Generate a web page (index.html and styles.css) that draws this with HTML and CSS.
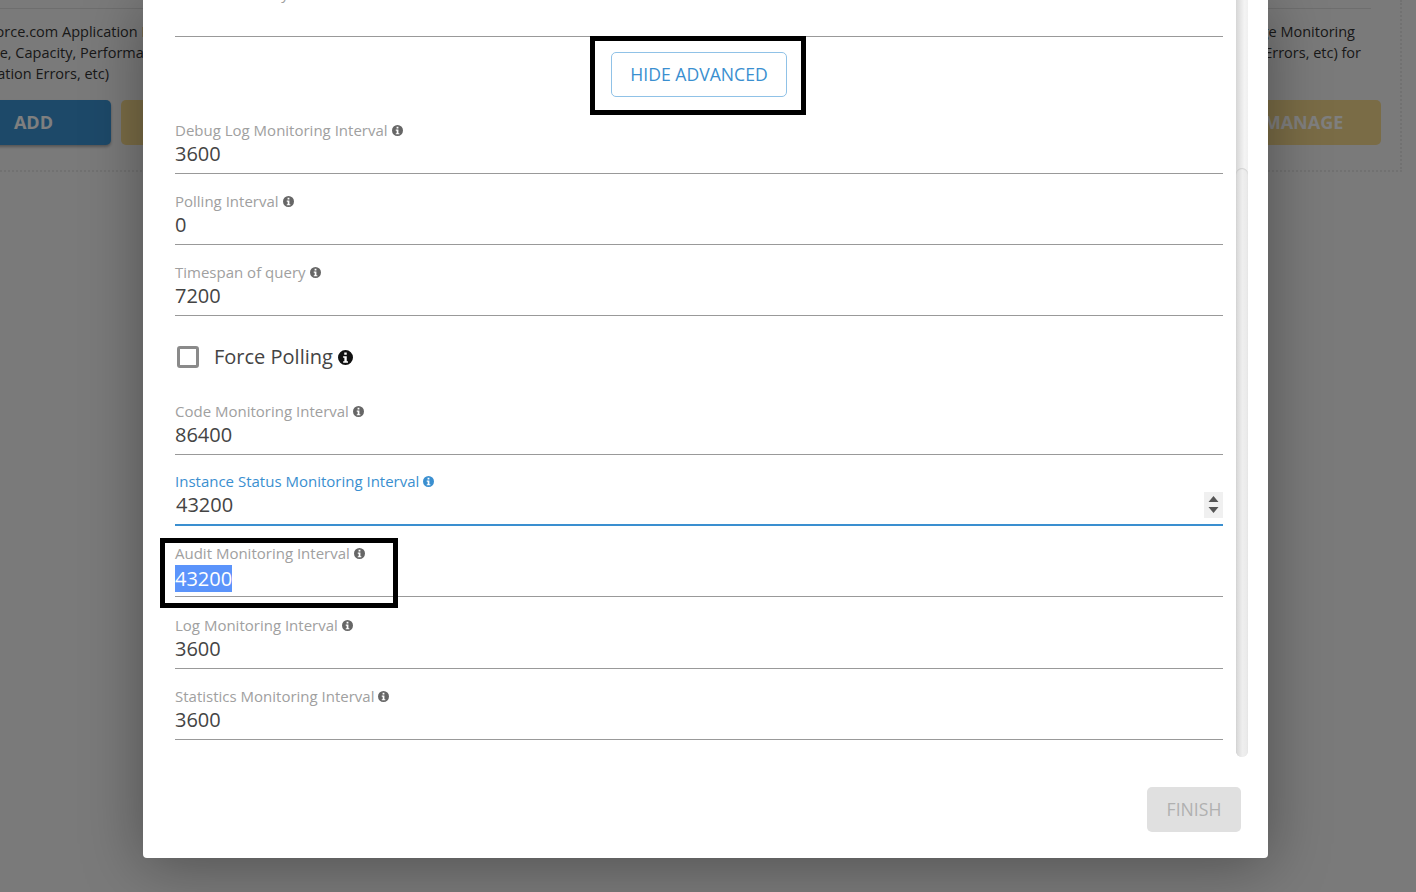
FILE: index.html
```html
<!DOCTYPE html>
<html lang="en">
<head>
<meta charset="utf-8">
<title>Add Application</title>
<link rel="stylesheet" href="styles.css">
</head>
<body>
<svg class="defs" width="0" height="0" aria-hidden="true">
  <symbol id="info" viewBox="0 0 24 24">
    <path fill-rule="evenodd" d="M12 0a12 12 0 1 0 0 24a12 12 0 0 0 0-24zM10 3.800h4v3.600h-4zM8.200 9.800h5.800v8h2v2.600H8.200v-2.600h2v-5.400h-2z"/>
  </symbol>
</svg>

<main class="page">
  <section class="card">
    <div class="rule"></div>
    <p class="blurb">Salesforce.com Application Health<br>Storage, Capacity, Performance,<br>Application Errors, etc)</p>
    <div class="actions">
      <button class="bg-btn blue">ADD</button>
      <button class="bg-btn yellow">MANAGE</button>
    </div>
  </section>
  <section class="card card-right">
    <div class="rule"></div>
    <p class="blurb blurb-right"><span class="line line-short">Salesforce.com Instance Usage Monitoring</span><span class="line">(Usage, Capacity, Limit Errors, etc) for</span></p>
    <div class="actions actions-right">
      <button class="bg-btn blue">ADD</button>
      <button class="bg-btn yellow">MANAGE</button>
    </div>
  </section>
</main>

<div class="overlay"></div>

<div class="modal">
  <div class="modal-body">
    <form class="fields">
      <div class="field field-first">
        <label class="label">Monitor Latency <svg class="i"><use href="#info"/></svg></label>
        <div class="value"></div>
      </div>
      <div class="adv-row"><button type="button" class="adv-btn">HIDE ADVANCED</button></div>
      <div class="field">
        <label class="label">Debug Log Monitoring Interval <svg class="i"><use href="#info"/></svg></label>
        <div class="value">3600</div>
      </div>
      <div class="field">
        <label class="label">Polling Interval <svg class="i"><use href="#info"/></svg></label>
        <div class="value">0</div>
      </div>
      <div class="field">
        <label class="label">Timespan of query <svg class="i"><use href="#info"/></svg></label>
        <div class="value">7200</div>
      </div>
      <div class="check-row">
        <span class="box"></span>
        <span class="check-text">Force Polling</span>
        <svg class="i-lg"><use href="#info"/></svg>
      </div>
      <div class="field">
        <label class="label">Code Monitoring Interval <svg class="i"><use href="#info"/></svg></label>
        <div class="value">86400</div>
      </div>
      <div class="field focused">
        <label class="label">Instance Status Monitoring Interval <svg class="i"><use href="#info"/></svg></label>
        <div class="value">43200</div>
        <span class="spinner">
          <svg width="19" height="26" viewBox="0 0 19 26"><path d="M9.500 4l5 6h-10zM4.500 15h10l-5 6z"/></svg>
        </span>
      </div>
      <div class="field">
        <label class="label">Audit Monitoring Interval <svg class="i"><use href="#info"/></svg></label>
        <div class="value value-selected"><span class="selected">43200</span></div>
      </div>
      <div class="field">
        <label class="label">Log Monitoring Interval <svg class="i"><use href="#info"/></svg></label>
        <div class="value">3600</div>
      </div>
      <div class="field">
        <label class="label">Statistics Monitoring Interval <svg class="i"><use href="#info"/></svg></label>
        <div class="value">3600</div>
      </div>
    </form>
    <div class="scrollbar"><div class="thumb"></div></div>
  </div>
  <div class="modal-footer">
    <button class="finish" disabled>FINISH</button>
  </div>
</div>

<div class="note note-adv"></div>
<div class="note note-audit"></div>
</body>
</html>
```
FILE: styles.css
```css
* { box-sizing: border-box; }
html, body { margin: 0; padding: 0; height: 100%; }
body {
  width: 1416px;
  height: 892px;
  overflow: hidden;
  position: relative;
  background: #f5f5f5;
  font-family: "Open Sans", "Liberation Sans", sans-serif;
  color: #333;
}
.defs { position: absolute; }

/* background page */
.page {
  width: 1446px;
  height: 172px;
  margin-left: -44px;
  padding-right: 19px;
  display: flex;
  justify-content: space-between;
  border-bottom: 2px dotted #e2e2e2;
  border-right: 2px dotted #e2e2e2;
}
.card { width: 320px; padding-top: 8px; }
.rule { height: 1px; background: #ddd; margin-bottom: 12px; }
.card-right .rule { margin-right: 10px; }
.blurb {
  margin: 0 0 16px;
  font-size: 14.500px;
  line-height: 21px;
  white-space: nowrap;
  color: #333;
}
.blurb-right { height: 63px; text-align: right; margin-right: 20px; }
.line { display: block; }
.line-short { margin-right: 6px; }
.actions { display: flex; gap: 10px; }
.actions-right { justify-content: flex-end; }
.bg-btn {
  width: 155px;
  height: 45px;
  border: 0;
  border-radius: 5px;
  padding: 0 0 2px;
  font: 700 18px "Open Sans", sans-serif;
  color: #fff;
}
.blue { background: #3a93d3; box-shadow: 0 2px 3px rgba(0,0,0,.3); }
.yellow { background: #f4d88c; }

.overlay {
  position: absolute;
  inset: 0;
  background: rgba(0,0,0,.5);
}

/* modal */
.modal {
  position: absolute;
  left: 143px;
  top: 0;
  width: 1125px;
  height: 858px;
  background: #fff;
  border-radius: 0 0 4px 4px;
  box-shadow: 0 6px 60px rgba(0,0,0,.35);
  display: flex;
  flex-direction: column;
  overflow: hidden;
}
.modal-body {
  display: flex;
  height: 757px;
  padding-left: 32px;
}
.fields { width: 1048px; }
.field {
  position: relative;
  height: 71.2px;
  display: flex;
  flex-direction: column;
  justify-content: flex-end;
  border-bottom: 1px solid #999;
}
.field-first { margin-top: -34.2px; }
.label {
  font-size: 15px;
  line-height: 20px;
  color: #a0a0a0;
  white-space: nowrap;
  display: flex;
  align-items: center;
  gap: 4px;
}
.i { width: 11px; height: 11px; fill: #666; margin-top: 1px; }
.value {
  height: 33px;
  font-size: 20px;
  line-height: 27px;
  color: #444;
}
.value-selected { display: flex; align-items: flex-start; }
.selected {
  height: 27px;
  margin-top: 2px;
  line-height: 27px;
  background: #5b94fb;
  color: #fff;
}

.focused { border-bottom: 2px solid #3a8fd0; }
.focused .label { color: #3a8fd0; }
.focused .i { fill: #3a8fd0; }
.focused .value { padding-left: 1px; }
.spinner {
  position: absolute;
  right: 0;
  bottom: 6px;
  width: 19px;
  height: 26px;
  background: #f0f0f0;
  display: flex;
}
.spinner svg { fill: #555; }

.adv-row {
  height: 65.600px;
  padding-top: 15px;
  display: flex;
  justify-content: center;
}
.adv-btn {
  width: 176px;
  height: 45px;
  background: #fff;
  border: 1px solid #90c2e7;
  border-radius: 5px;
  color: #3a8fd0;
  font: 400 17.600px "Open Sans", sans-serif;
  padding: 0 0 2px;
}

.check-row {
  height: 67.600px;
  padding: 19px 0 0 2px;
  display: flex;
  align-items: flex-start;
}
.box {
  width: 22px;
  height: 22px;
  border: 3px solid #8a8a8a;
  border-radius: 3px;
  margin-top: 11px;
}
.check-text {
  font-size: 20px;
  line-height: 27px;
  margin: 8px 5px 0 15px;
  color: #444;
}
.i-lg { width: 15px; height: 15px; fill: #111; margin-top: 15px; }

.scrollbar {
  width: 12px;
  height: 757px;
  margin-left: 13px;
  background: linear-gradient(90deg, #d6d6d6, #f4f4f4 70%, #f0f0f0);
  border-radius: 0 0 6px 6px;
  padding-top: 168px;
}
.thumb {
  height: 589px;
  border-radius: 6px;
  background: linear-gradient(90deg, #d6d6d6, #efefef 55%, #e9e9e9);
  box-shadow: inset 0 1px 1px rgba(0,0,0,.12);
}

.modal-footer {
  display: flex;
  justify-content: flex-end;
  padding: 30px 27px 0 0;
}
.finish {
  width: 94px;
  height: 45px;
  border: 0;
  border-radius: 5px;
  background: #e0e0e0;
  color: #b0b0b0;
  font: 400 17.600px "Open Sans", sans-serif;
  padding: 0 0 2px;
}

/* annotation boxes */
.note { position: absolute; border: 5px solid #000; }
.note-adv { left: 590px; top: 36px; width: 216px; height: 79px; }
.note-audit { left: 160px; top: 538px; width: 238px; height: 70px; }
```
